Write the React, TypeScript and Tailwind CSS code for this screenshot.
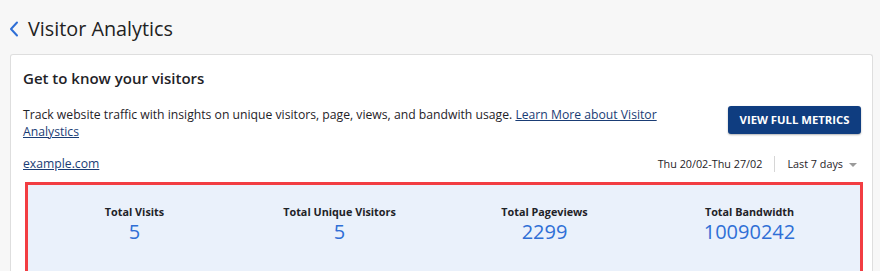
const stats = [
  { label: "Total Visits", value: "5" },
  { label: "Total Unique Visitors", value: "5" },
  { label: "Total Pageviews", value: "2299" },
  { label: "Total Bandwidth", value: "10090242" },
];

export default function App() {
  return (
    <div className="h-[271px] overflow-hidden bg-[#f7f7f7] font-['Open_Sans',sans-serif] text-[#1f2328]">
      <header className="flex h-[54px] items-center gap-[9px] pl-[9px] pt-[4px]">
        <svg width="10" height="16" viewBox="0 0 10 16" fill="none" className="text-[#2f6fd6]">
          <path d="M8 1.5 2 8l6 6.5" stroke="currentColor" strokeWidth="2" strokeLinecap="round" strokeLinejoin="round" />
        </svg>
        <h1 className="text-[19.8px] leading-none text-[#222]">Visitor Analytics</h1>
      </header>

      <section className="ml-[10px] mr-[7px] rounded-t-[3px] border border-b-0 border-[#dedede] bg-white pl-[12px] pr-[11px] pt-[12px]">
        <h2 className="text-[15px] font-semibold leading-[22px]">Get to know your visitors</h2>

        <div className="mt-[17px] flex items-start justify-between">
          <p className="w-[660px] text-[12.2px] leading-[17px]">
            Track website traffic with insights on unique visitors, page, views, and bandwith usage.{" "}
            <a href="#" className="text-[#1a3d75] underline">
              Learn More about Visitor Analystics
            </a>
          </p>
          <button className="h-[28px] w-[133px] rounded-[3px] bg-[#0f3d80] text-[11.3px] font-bold uppercase text-white shadow-[0_1px_2px_rgba(0,0,0,0.3)]">
            View Full Metrics
          </button>
        </div>

        <div className="mt-[15px] flex items-center justify-between">
          <a href="#" className="text-[12.2px] leading-[18px] text-[#1a3d75] underline">
            example.com
          </a>
          <div className="flex items-center pr-[4px] text-[10.8px] leading-[18px]">
            <span>Thu 20/02-Thu 27/02</span>
            <span className="mx-[12px] h-[16px] w-px bg-[#d6d6d6]" />
            <span>Last 7 days</span>
            <span className="ml-[6px] mt-[1px] h-0 w-0 border-x-[4px] border-t-[4px] border-x-transparent border-t-[#9a9a9a]" />
          </div>
        </div>

        <div className="ml-[2px] mr-[-2px] mt-[9px] border-[3px] border-[#f23d42] bg-white">
          <div className="grid h-[90px] grid-cols-4 rounded-br-[3px] bg-[#eaf1fb] pl-[4px] pr-[8px] pt-[19px]">
            {stats.map((s) => (
              <div key={s.label} className="flex flex-col items-center">
                <span className="text-[10.8px] font-bold leading-[15px]">{s.label}</span>
                <span className="text-[20px] leading-[26px] text-[#2f6fd6]">{s.value}</span>
              </div>
            ))}
          </div>
        </div>
      </section>
    </div>
  );
}
